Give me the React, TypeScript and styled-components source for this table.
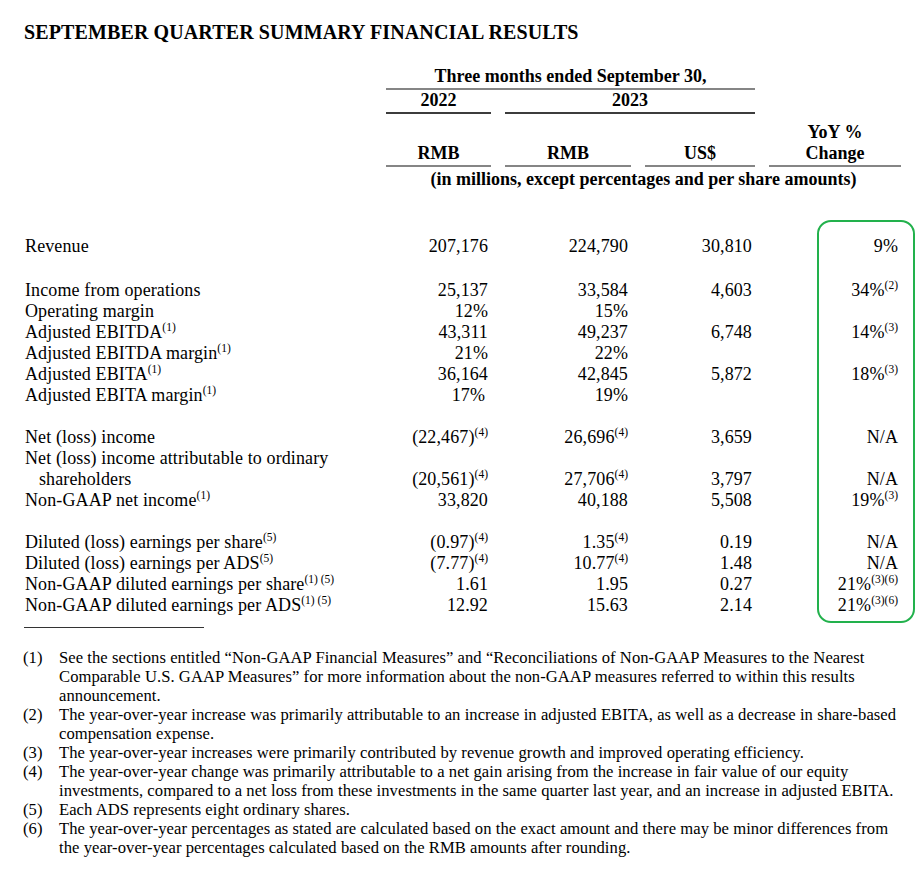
import React from "react";
import styled, { createGlobalStyle } from "styled-components";

const GlobalStyle = createGlobalStyle`
  html, body { margin: 0; padding: 0; background: #ffffff; }
  body { font-family: "Liberation Serif", "Times New Roman", serif; color: #000; }
`;

const COLS = "348px 105px 126px 110px 132px";

const Page = styled.div`
  width: 920px;
  min-height: 880px;
  box-sizing: border-box;
  padding: 19.5px 0 0 24px;
  font-family: "Liberation Serif", "Times New Roman", serif;
  color: #000;
`;

const Title = styled.h1`
  margin: 0;
  font-size: 20px;
  line-height: 24px;
  font-weight: 700;
  letter-spacing: 0.12px;
`;

const Table = styled.div`
  margin-top: 22px;
  width: 878px;
`;

const HeadRow = styled.div<{ $padTop?: number }>`
  display: grid;
  grid-template-columns: ${COLS};
  column-gap: 14px;
  padding-top: ${(p) => p.$padTop ?? 0}px;
  font-size: 18px;
  line-height: 21px;
  font-weight: 700;
`;

const HeadCell = styled.div<{ $col: string; $rule?: "light" | "dark" }>`
  grid-column: ${(p) => p.$col};
  align-self: end;
  text-align: center;
  white-space: nowrap;
  padding-bottom: ${(p) => (p.$rule ? 1 : 0)}px;
  border-bottom: ${(p) =>
    p.$rule === "dark"
      ? "2px solid #3c3c3c"
      : p.$rule === "light"
      ? "2px solid #858585"
      : "none"};
`;

const Body = styled.div`
  position: relative;
  margin-top: 46.5px;
`;

const Row = styled.div`
  display: grid;
  grid-template-columns: ${COLS};
  column-gap: 14px;
  font-size: 18px;
  line-height: 21px;
  height: 21px;
  letter-spacing: 0.12px;
`;

const Spacer = styled.div<{ $h: number }>`
  height: ${(p) => p.$h}px;
`;

const Label = styled.div<{ $indent?: number }>`
  padding-left: ${(p) => 1 + (p.$indent ?? 0)}px;
  white-space: nowrap;
`;

const Value = styled.div<{ $pad?: number }>`
  text-align: right;
  padding-right: ${(p) => p.$pad ?? 3}px;
  white-space: nowrap;
`;

const Sup = styled.sup`
  font-size: 11.5px;
  line-height: 0;
  vertical-align: 7px;
  letter-spacing: 0;
`;

const Highlight = styled.div`
  position: absolute;
  left: 793px;
  top: -16px;
  width: 98px;
  height: 403px;
  box-sizing: border-box;
  border: 2px solid #22b14c;
  border-radius: 14px;
  pointer-events: none;
`;

const Rule = styled.div`
  margin-top: 10.5px;
  width: 180px;
  height: 1px;
  background: #333;
`;

const Notes = styled.div`
  margin-top: 20px;
  margin-left: -1px;
  display: grid;
  grid-template-columns: 36px auto;
  font-size: 16.6px;
  line-height: 19px;
  letter-spacing: 0.06px;
`;

const NoteNum = styled.div`
  white-space: nowrap;
`;

const NoteText = styled.div`
  white-space: nowrap;
`;

type Cell = { v: string; s?: string; pad?: number } | null;
type RowData =
  | { spacer: number }
  | { label: string; ls?: string; indent?: number; cells?: Cell[] };

const c = (v: string, s?: string, pad?: number): Cell => ({ v, s, pad });

const rows: RowData[] = [
  { label: "Revenue", cells: [c("207,176"), c("224,790"), c("30,810"), c("9%")] },
  { spacer: 23 },
  { label: "Income from operations", cells: [c("25,137"), c("33,584"), c("4,603"), c("34%", "(2)")] },
  { label: "Operating margin", cells: [c("12%"), c("15%"), null, null] },
  { label: "Adjusted EBITDA", ls: "(1)", cells: [c("43,311"), c("49,237"), c("6,748"), c("14%", "(3)")] },
  { label: "Adjusted EBITDA margin", ls: "(1)", cells: [c("21%"), c("22%"), null, null] },
  { label: "Adjusted EBITA", ls: "(1)", cells: [c("36,164"), c("42,845"), c("5,872"), c("18%", "(3)")] },
  { label: "Adjusted EBITA margin", ls: "(1)", cells: [c("17%", undefined, 6), c("19%"), null, null] },
  { spacer: 21 },
  { label: "Net (loss) income", cells: [c("(22,467)", "(4)"), c("26,696", "(4)"), c("3,659"), c("N/A")] },
  { label: "Net (loss) income attributable to ordinary" },
  { label: "shareholders", indent: 14, cells: [c("(20,561)", "(4)"), c("27,706", "(4)"), c("3,797"), c("N/A")] },
  { label: "Non-GAAP net income", ls: "(1)", cells: [c("33,820"), c("40,188"), c("5,508"), c("19%", "(3)")] },
  { spacer: 21 },
  { label: "Diluted (loss) earnings per share", ls: "(5)", cells: [c("(0.97)", "(4)"), c("1.35", "(4)"), c("0.19"), c("N/A")] },
  { label: "Diluted (loss) earnings per ADS", ls: "(5)", cells: [c("(7.77)", "(4)"), c("10.77", "(4)"), c("1.48"), c("N/A")] },
  { label: "Non-GAAP diluted earnings per share", ls: "(1) (5)", cells: [c("1.61"), c("1.95"), c("0.27"), c("21%", "(3)(6)")] },
  { label: "Non-GAAP diluted earnings per ADS", ls: "(1) (5)", cells: [c("12.92"), c("15.63"), c("2.14"), c("21%", "(3)(6)")] },
];

const notes: { n: string; lines: string[] }[] = [
  {
    n: "(1)",
    lines: [
      "See the sections entitled \u201cNon-GAAP Financial Measures\u201d and \u201cReconciliations of Non-GAAP Measures to the Nearest",
      "Comparable U.S. GAAP Measures\u201d for more information about the non-GAAP measures referred to within this results",
      "announcement.",
    ],
  },
  {
    n: "(2)",
    lines: [
      "The year-over-year increase was primarily attributable to an increase in adjusted EBITA, as well as a decrease in share-based",
      "compensation expense.",
    ],
  },
  {
    n: "(3)",
    lines: ["The year-over-year increases were primarily contributed by revenue growth and improved operating efficiency."],
  },
  {
    n: "(4)",
    lines: [
      "The year-over-year change was primarily attributable to a net gain arising from the increase in fair value of our equity",
      "investments, compared to a net loss from these investments in the same quarter last year, and an increase in adjusted EBITA.",
    ],
  },
  { n: "(5)", lines: ["Each ADS represents eight ordinary shares."] },
  {
    n: "(6)",
    lines: [
      "The year-over-year percentages as stated are calculated based on the exact amount and there may be minor differences from",
      "the year-over-year percentages calculated based on the RMB amounts after rounding.",
    ],
  },
];

export default function App() {
  return (
    <>
      <GlobalStyle />
      <Page>
        <Title>SEPTEMBER QUARTER SUMMARY FINANCIAL RESULTS</Title>
        <Table>
          <HeadRow>
            <HeadCell $col="2 / 5" $rule="light">Three months ended September 30,</HeadCell>
          </HeadRow>
          <HeadRow>
            <HeadCell $col="2 / 3" $rule="dark">2022</HeadCell>
            <HeadCell $col="3 / 5" $rule="dark">2023</HeadCell>
          </HeadRow>
          <HeadRow $padTop={8.5}>
            <HeadCell $col="2 / 3" $rule="light">RMB</HeadCell>
            <HeadCell $col="3 / 4" $rule="light">RMB</HeadCell>
            <HeadCell $col="4 / 5" $rule="light">US$</HeadCell>
            <HeadCell $col="5 / 6" $rule="light">
              YoY %
              <br />
              Change
            </HeadCell>
          </HeadRow>
          <HeadRow $padTop={1.5}>
            <HeadCell $col="2 / 6">(in millions, except percentages and per share amounts)</HeadCell>
          </HeadRow>
          <Body>
            {rows.map((r, i) =>
              "spacer" in r ? (
                <Spacer key={i} $h={r.spacer} />
              ) : (
                <Row key={i}>
                  <Label $indent={r.indent}>
                    {r.label}
                    {r.ls && <Sup>{r.ls}</Sup>}
                  </Label>
                  {(r.cells ?? [null, null, null, null]).map((cell, j) => (
                    <Value key={j} $pad={cell?.pad}>
                      {cell?.v}
                      {cell?.s && <Sup>{cell.s}</Sup>}
                    </Value>
                  ))}
                </Row>
              )
            )}
            <Highlight />
          </Body>
        </Table>
        <Rule />
        <Notes>
          {notes.map((note) => (
            <React.Fragment key={note.n}>
              <NoteNum>{note.n}</NoteNum>
              <NoteText>
                {note.lines.map((l, k) => (
                  <React.Fragment key={k}>
                    {k > 0 && <br />}
                    {l}
                  </React.Fragment>
                ))}
              </NoteText>
            </React.Fragment>
          ))}
        </Notes>
      </Page>
    </>
  );
}
